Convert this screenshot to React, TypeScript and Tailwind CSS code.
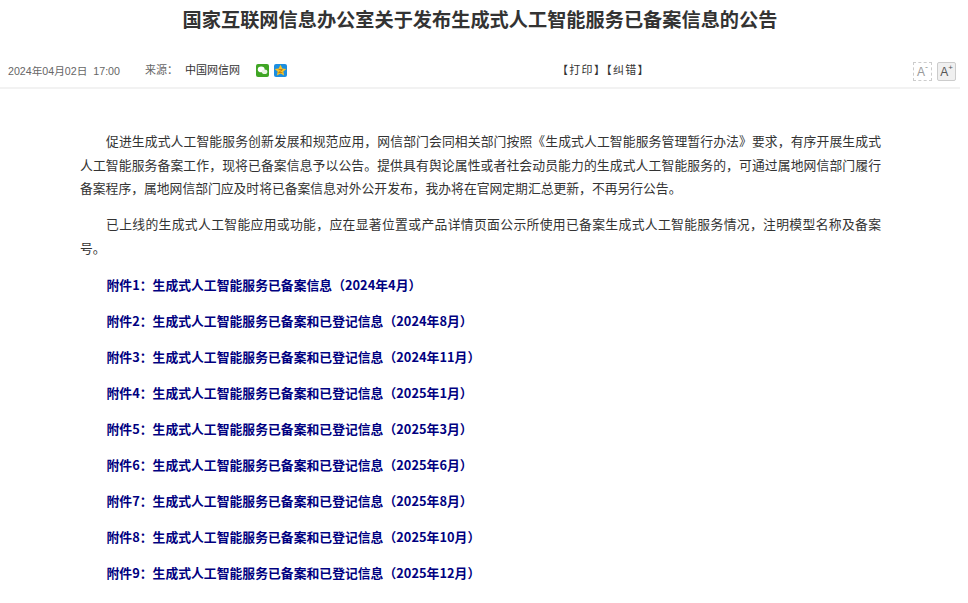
const CJK = '"Liberation Sans", "Noto Sans CJK SC", sans-serif';
const BOLD = '"Noto Sans CJK SC", sans-serif';

const attachments = [
  '附件1：生成式人工智能服务已备案信息（2024年4月）',
  '附件2：生成式人工智能服务已备案和已登记信息（2024年8月）',
  '附件3：生成式人工智能服务已备案和已登记信息（2024年11月）',
  '附件4：生成式人工智能服务已备案和已登记信息（2025年1月）',
  '附件5：生成式人工智能服务已备案和已登记信息（2025年3月）',
  '附件6：生成式人工智能服务已备案和已登记信息（2025年6月）',
  '附件7：生成式人工智能服务已备案和已登记信息（2025年8月）',
  '附件8：生成式人工智能服务已备案和已登记信息（2025年10月）',
  '附件9：生成式人工智能服务已备案和已登记信息（2025年12月）',
];

const WechatIcon = () => (
  <svg width="13" height="13" viewBox="0 0 13 13">
    <rect width="13" height="13" rx="2" fill="#3fa524" />
    <ellipse cx="5.2" cy="5.4" rx="3.4" ry="2.8" fill="#fff" />
    <ellipse cx="8.6" cy="7.8" rx="2.8" ry="2.3" fill="#e8f4e2" />
  </svg>
);

const QzoneIcon = () => (
  <svg width="13" height="13" viewBox="0 0 13 13">
    <rect width="13" height="13" rx="2" fill="#1c8ee0" />
    <path d="M6.5 .8 8.3 4.4l4 .5-3 2.7.8 4-3.6-2-3.6 2 .8-4-3-2.7 4-.5z" fill="#f7c325" />
    <path d="M4.6 5.6h3.8L4.6 8.6h3.8" fill="none" stroke="#b5741a" strokeWidth="0.9" />
  </svg>
);

export default function App() {
  return (
    <div className="w-[960px] bg-white text-[#333]" style={{ fontFamily: CJK }}>
      <h1 className="pt-[7px] h-[50px] text-center text-[19.2px] leading-[28px] font-bold text-[#333]">
        国家互联网信息办公室关于发布生成式人工智能服务已备案信息的公告
      </h1>

      <div className="flex items-center h-[39px] pt-[4px] pl-2 pr-[4px] border-b-2 border-[#f2f2f2] text-[#666]">
        <span className="w-[137px] whitespace-pre text-[10.67px]">2024年04月02日  17:00</span>
        <span className="w-[40px] text-[11px]">来源：</span>
        <span className="w-[71px] text-[11px] text-[#333]">中国网信网</span>
        <span className="flex gap-[5px] w-[301px]">
          <WechatIcon />
          <QzoneIcon />
        </span>
        <span className="text-[11px] tracking-[1.3px] text-[#333]">【打印】【纠错】</span>
        <span className="ml-auto mt-[2px] flex gap-[5px]">
          <span className="flex items-center justify-center w-[19px] h-[19px] border border-dashed border-[#ccc] text-[12px] text-[#999]">
            A<sup className="text-[9px]">-</sup>
          </span>
          <span className="flex items-center justify-center w-[19px] h-[19px] rounded-[2px] border border-[#ccc] bg-[#f0f0f0] text-[12px] text-[#555]">
            A<sup className="text-[8px]">+</sup>
          </span>
        </span>
      </div>

      <div className="pl-[80px] pr-[79px] pt-[41px] text-[12.8px] leading-[23.68px] text-[#333]">
        <p className="mb-3 indent-[26px] text-justify">
          促进生成式人工智能服务创新发展和规范应用，网信部门会同相关部门按照《生成式人工智能服务管理暂行办法》要求，有序开展生成式人工智能服务备案工作，现将已备案信息予以公告。提供具有舆论属性或者社会动员能力的生成式人工智能服务的，可通过属地网信部门履行备案程序，属地网信部门应及时将已备案信息对外公开发布，我办将在官网定期汇总更新，不再另行公告。
        </p>
        <p className="mb-[13px] indent-[26px] text-justify">
          已上线的生成式人工智能应用或功能，应在显著位置或产品详情页面公示所使用已备案生成式人工智能服务情况，注明模型名称及备案号。
        </p>
        {attachments.map((a) => (
          <p key={a} className="mb-[12.32px] indent-[26.5px] font-bold tracking-[0.03px] text-[#000080]" style={{ fontFamily: BOLD }}>
            {a}
          </p>
        ))}
      </div>
    </div>
  );
}
